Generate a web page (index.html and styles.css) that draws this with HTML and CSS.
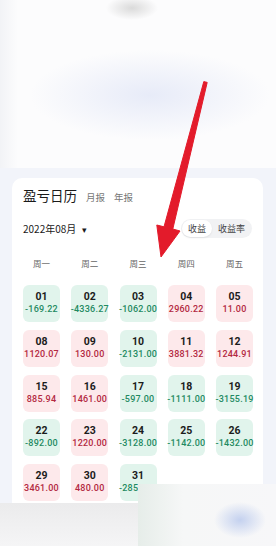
FILE: index.html
```html
<!DOCTYPE html>
<html lang="zh">
<head>
    <meta charset="UTF-8">
    <meta name="viewport" content="width=device-width, initial-scale=1.0">
    <title>盈亏日历</title>
    <link rel="stylesheet" href="styles.css">
</head>
<body>
    <div class="hero"></div>

    <div class="card">
        <div class="card-head">
            <span class="title">盈亏日历</span>
            <span class="tab">月报</span>
            <span class="tab">年报</span>
        </div>

        <div class="date-row">
            <span class="month">2022年08月 <span class="caret">▾</span></span>
            <div class="toggle">
                <span class="seg active">收益</span>
                <span class="seg">收益率</span>
            </div>
        </div>

        <div class="week">
            <span>周一</span><span>周二</span><span>周三</span><span>周四</span><span>周五</span>
        </div>

        <div class="days">
            <div class="day down"><b>01</b><span>-169.22</span></div>
            <div class="day down"><b>02</b><span>-4336.27</span></div>
            <div class="day down"><b>03</b><span>-1062.00</span></div>
            <div class="day up"><b>04</b><span>2960.22</span></div>
            <div class="day up"><b>05</b><span>11.00</span></div>

            <div class="day up"><b>08</b><span>1120.07</span></div>
            <div class="day up"><b>09</b><span>130.00</span></div>
            <div class="day down"><b>10</b><span>-2131.00</span></div>
            <div class="day up"><b>11</b><span>3881.32</span></div>
            <div class="day up"><b>12</b><span>1244.91</span></div>

            <div class="day up"><b>15</b><span>885.94</span></div>
            <div class="day up"><b>16</b><span>1461.00</span></div>
            <div class="day down"><b>17</b><span>-597.00</span></div>
            <div class="day down"><b>18</b><span>-1111.00</span></div>
            <div class="day down"><b>19</b><span>-3155.19</span></div>

            <div class="day down"><b>22</b><span>-892.00</span></div>
            <div class="day up"><b>23</b><span>1220.00</span></div>
            <div class="day down"><b>24</b><span>-3128.00</span></div>
            <div class="day down"><b>25</b><span>-1142.00</span></div>
            <div class="day down"><b>26</b><span>-1432.00</span></div>

            <div class="day up"><b>29</b><span>3461.00</span></div>
            <div class="day up"><b>30</b><span>480.00</span></div>
            <div class="day down"><b>31</b><span>-2855.00</span></div>
        </div>
    </div>

    <!-- blurred bottom bar lying over the calendar -->
    <div class="bottom-left"></div>
    <div class="bottom-right"></div>

    <!-- red pointer arrow drawn over the screenshot -->
    <svg class="arrow" width="276" height="546" viewBox="0 0 276 546">
        <polygon fill="#e31b2b" stroke="#e31b2b" stroke-width="1" stroke-linejoin="round"
                 points="207.2,82.4 172.8,229 180,231 161,257 156.8,225 164,226.8 203.8,81.6"/>
    </svg>
</body>
</html>
```

FILE: styles.css
```css
body {
    margin: 0;
    width: 276px;
    height: 546px;
    overflow: hidden;
    position: relative;
    background-color: #f2f4fa;
    font-family: "Noto Sans CJK SC", "Noto Sans", sans-serif;
    color: #222;
}
.hero {
    height: 168px;
    background:
        radial-gradient(ellipse 26px 12px at 132px 8px, #dadada, rgba(218,218,218,0)),
        radial-gradient(ellipse 120px 45px at 150px 95px, #e7ebf8, rgba(231,235,248,0)),
        linear-gradient(90deg, #f2f3f6 0, #fcfcfd 18px, #fcfcfd 100%);
}
.card {
    margin: 10px 13px 0 12px;
    padding: 6px 10px 10px 11px;
    background-color: #fff;
    border-radius: 10px;
    height: 340px;
}
.card-head {
    display: flex;
    align-items: baseline;
    gap: 9px;
    height: 22px;
    line-height: 22px;
}
.title {
    font-size: 13.5px;
    color: #1a1a1a;
}
.tab {
    font-size: 9.5px;
    color: #777;
}
.date-row {
    display: flex;
    justify-content: space-between;
    align-items: center;
    margin-top: 13px;
    height: 19px;
}
.month {
    font-size: 10px;
    color: #1a1a1a;
}
.caret {
    font-size: 9px;
    margin-left: 3px;
}
.toggle {
    display: flex;
    background-color: #f1f2f4;
    border-radius: 10px;
    padding: 1px;
    margin-right: 1px;
}
.seg {
    font-size: 9px;
    color: #444;
    padding: 0 6px;
    line-height: 17px;
    border-radius: 9px;
}
.seg.active {
    background-color: #fff;
    box-shadow: 0 1px 2px rgba(0,0,0,0.08);
}
.week,
.days {
    display: grid;
    grid-template-columns: repeat(5, 37px);
    column-gap: 11.25px;
}
.week {
    margin-top: 18px;
    line-height: 14px;
    font-size: 8.5px;
    color: #666;
    text-align: center;
}
.days {
    margin-top: 15px;
    row-gap: 7.75px;
}
.day {
    height: 37px;
    border-radius: 6px;
    display: flex;
    flex-direction: column;
    align-items: center;
    padding-top: 6px;
    box-sizing: border-box;
    font-family: Roboto, "Liberation Sans", sans-serif;
    white-space: nowrap;
}
.day b {
    font-size: 10.5px;
    line-height: 12px;
    color: #1c1c1c;
}
.day span {
    font-size: 9px;
    line-height: 13px;
    font-weight: 500;
    letter-spacing: 0.25px;
}
.day.down {
    background-color: #e1f4ec;
}
.day.down span {
    color: #1f8a62;
}
.day.up {
    background-color: #fde9eb;
}
.day.up span {
    color: #b3283f;
}
.bottom-left {
    position: absolute;
    left: 0;
    top: 503px;
    width: 276px;
    height: 43px;
    background: linear-gradient(#ebebec, #f5f5f6);
}
.bottom-right {
    position: absolute;
    left: 138px;
    top: 484px;
    width: 138px;
    height: 62px;
    background:
        radial-gradient(ellipse 26px 18px at 102px 36px, #c4d1ef, rgba(196,209,239,0)),
        linear-gradient(90deg, #e6ede9 0, #f6f7f7 45px, #f7f7f9 100%);
}
.arrow {
    position: absolute;
    left: 0;
    top: 0;
    pointer-events: none;
}
```
